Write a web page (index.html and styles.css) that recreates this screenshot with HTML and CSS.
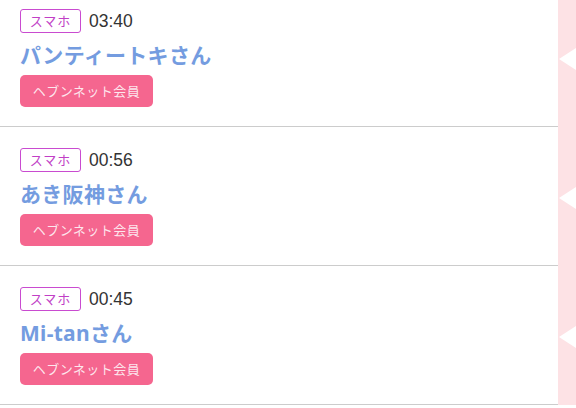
FILE: index.html
```html
<!DOCTYPE html>
<html lang="ja">
<head>
<meta charset="utf-8">
<link rel="stylesheet" href="styles.css">
</head>
<body>
<ul class="list">
  <li class="row">
    <div class="body">
      <div class="meta"><span class="badge">スマホ</span><span class="time">03:40</span></div>
      <div class="name">パンティートキさん</div>
      <span class="member">ヘブンネット会員</span>
    </div>
    <div class="side"><span class="arrow"></span></div>
  </li>
  <li class="row">
    <div class="body">
      <div class="meta"><span class="badge">スマホ</span><span class="time">00:56</span></div>
      <div class="name">あき阪神さん</div>
      <span class="member">ヘブンネット会員</span>
    </div>
    <div class="side"><span class="arrow"></span></div>
  </li>
  <li class="row">
    <div class="body">
      <div class="meta"><span class="badge">スマホ</span><span class="time">00:45</span></div>
      <div class="name">Mi-tanさん</div>
      <span class="member">ヘブンネット会員</span>
    </div>
    <div class="side"><span class="arrow"></span></div>
  </li>
</ul>
</body>
</html>
```
FILE: styles.css
```css
html, body {
  margin: 0;
  padding: 0;
  background: #ffffff;
  overflow: hidden;
}
body {
  font-family: "Liberation Sans", "Noto Sans CJK JP", sans-serif;
  color: #333333;
}
.list {
  list-style: none;
  margin: -12px 0 0 0;
  padding: 0;
}
.row {
  display: flex;
  height: 139px;
}
.body {
  width: 558px;
  box-sizing: border-box;
  padding: 21px 0 0 20px;
  border-bottom: 1px solid #cccccc;
  display: flex;
  flex-direction: column;
  align-items: flex-start;
}
.side {
  flex: 1;
  background: #fde2e5;
  display: flex;
  align-items: center;
  justify-content: flex-end;
}
.arrow {
  width: 0;
  height: 0;
  border-top: 11px solid transparent;
  border-bottom: 11px solid transparent;
  border-right: 17px solid #ffffff;
  margin-top: 2px;
}
.meta {
  display: flex;
  align-items: center;
  height: 24px;
}
.badge {
  box-sizing: border-box;
  height: 24px;
  width: 61px;
  border: 1px solid #c94bd0;
  border-radius: 3px;
  color: #c13fc6;
  font-family: "Noto Sans CJK JP", sans-serif;
  font-size: 13px;
  line-height: 22px;
  text-align: center;
  letter-spacing: 1px;
}
.time {
  margin-left: 8px;
  font-size: 17.5px;
  line-height: 24px;
  color: #333333;
}
.name {
  margin-top: 7px;
  height: 30px;
  line-height: 30px;
  font-size: 21px;
  font-weight: bold;
  letter-spacing: 0.3px;
  color: #749ce0;
  font-family: "Noto Sans", "Noto Sans CJK JP", sans-serif;
}
.member {
  margin-top: 5px;
  box-sizing: border-box;
  height: 32px;
  width: 133px;
  background: #f5668f;
  border-radius: 5px;
  color: rgba(255, 255, 255, 0.85);
  font-family: "Noto Sans CJK JP", sans-serif;
  font-size: 13px;
  line-height: 32px;
  text-align: center;
  letter-spacing: 0.5px;
}
```
